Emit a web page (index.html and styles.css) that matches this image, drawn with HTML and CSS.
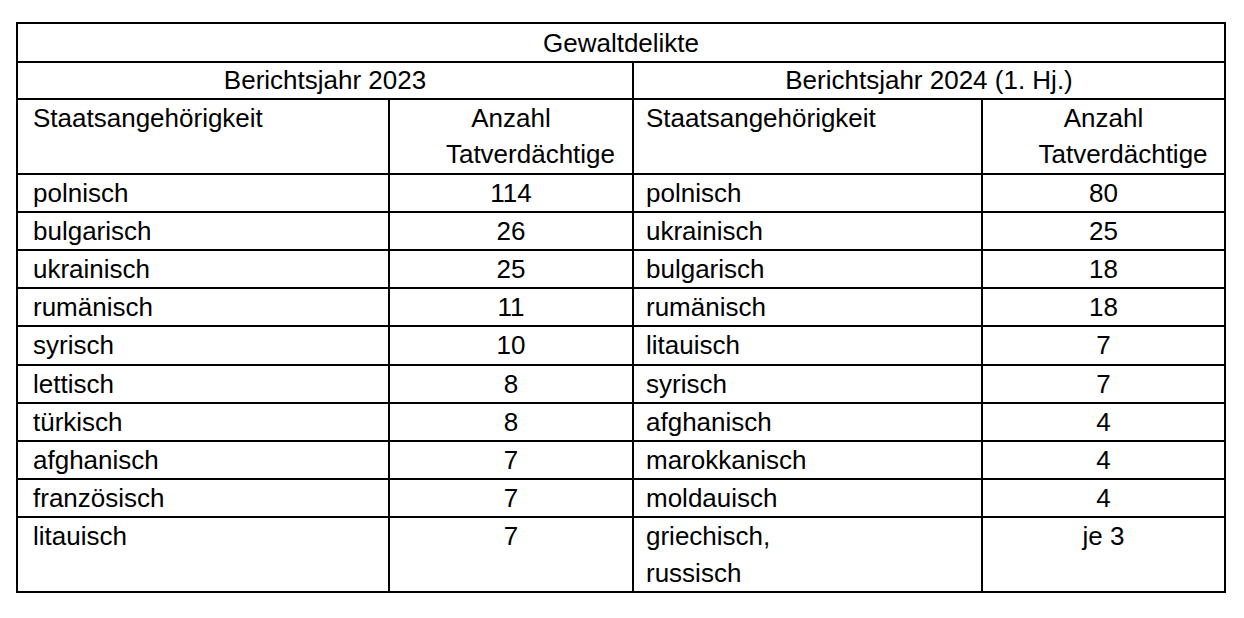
FILE: index.html
```html
<!DOCTYPE html>
<html lang="de">
<head>
<meta charset="utf-8">
<title>Gewaltdelikte</title>
<link rel="stylesheet" href="styles.css">
</head>
<body>
<table class="stats">
  <colgroup>
    <col class="c1">
    <col class="c2">
    <col class="c3">
    <col class="c4">
  </colgroup>
  <tr class="r-title"><td colspan="4" class="center">Gewaltdelikte</td></tr>
  <tr class="r-year"><td colspan="2" class="center">Berichtsjahr 2023</td><td colspan="2" class="center">Berichtsjahr 2024 (1. Hj.)</td></tr>
  <tr>
    <td class="name n1">Staatsangehörigkeit</td>
    <td class="center">Anzahl<span class="second">Tatverdächtige</span></td>
    <td class="name n3">Staatsangehörigkeit</td>
    <td class="center">Anzahl<span class="second">Tatverdächtige</span></td>
  </tr>
  <tr><td class="name n1">polnisch</td><td class="center">114</td><td class="name n3">polnisch</td><td class="center">80</td></tr>
  <tr><td class="name n1">bulgarisch</td><td class="center">26</td><td class="name n3">ukrainisch</td><td class="center">25</td></tr>
  <tr><td class="name n1">ukrainisch</td><td class="center">25</td><td class="name n3">bulgarisch</td><td class="center">18</td></tr>
  <tr><td class="name n1">rumänisch</td><td class="center">11</td><td class="name n3">rumänisch</td><td class="center">18</td></tr>
  <tr><td class="name n1">syrisch</td><td class="center">10</td><td class="name n3">litauisch</td><td class="center">7</td></tr>
  <tr><td class="name n1">lettisch</td><td class="center">8</td><td class="name n3">syrisch</td><td class="center">7</td></tr>
  <tr><td class="name n1">türkisch</td><td class="center">8</td><td class="name n3">afghanisch</td><td class="center">4</td></tr>
  <tr><td class="name n1">afghanisch</td><td class="center">7</td><td class="name n3">marokkanisch</td><td class="center">4</td></tr>
  <tr><td class="name n1">französisch</td><td class="center">7</td><td class="name n3">moldauisch</td><td class="center">4</td></tr>
  <tr class="r-last"><td class="name n1">litauisch</td><td class="center">7</td><td class="name n3">griechisch,<br>russisch</td><td class="center">je 3</td></tr>
</table>
</body>
</html>
```

FILE: styles.css
```css
html, body {
  margin: 0;
  padding: 0;
  background: #ffffff;
}

body {
  padding: 22px 0 0 16px;
  font-family: "Liberation Sans", Arial, Helvetica, sans-serif;
  color: #000000;
}

.stats {
  border-collapse: collapse;
  table-layout: fixed;
  width: 1210px;
  font-size: 26px;
  letter-spacing: 0;
  line-height: 36.2px;
}

.c1 { width: 372px; }
.c2 { width: 244px; }
.c3 { width: 349px; }
.c4 { width: 243px; }

.stats td {
  border: 2px solid #000000;
  padding: 0;
  vertical-align: top;
  white-space: nowrap;
}

.r-title td {
  padding-top: 1px;
}

.r-year td {
  line-height: 35px;
}

.center {
  text-align: center;
}

.name.n1 {
  padding-left: 15px;
}

.name.n3 {
  padding-left: 12px;
}

.second {
  display: block;
  padding-left: 39px;
}
```
